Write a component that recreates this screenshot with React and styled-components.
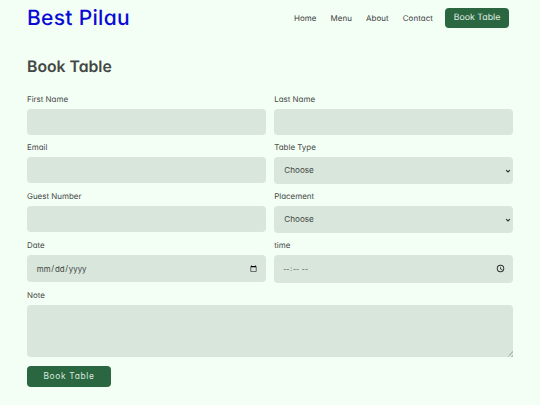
import React from "react";
import styled, { createGlobalStyle } from "styled-components";

const Global = createGlobalStyle`
  html, body { margin: 0; padding: 0; background: #f3fef5; }
  * { box-sizing: border-box; }
  body {
    font-family: "Inter", "Liberation Sans", sans-serif;
    font-feature-settings: "cv11";
    text-rendering: geometricPrecision;
    color: #3f4540;
  }
`;
const Page = styled.div`
  zoom: 0.75;
  width: 720px;
  height: 540px;
  padding: 0 36px;
  overflow: hidden;
`;
const Header = styled.header`
  display: flex;
  align-items: center;
  justify-content: space-between;
  height: 48px;
`;
const Logo = styled.div`
  font-size: 28px;
  font-weight: 500;
  color: #0a0ad6;
  letter-spacing: 0.4px;
`;
const Nav = styled.nav`
  display: flex;
  align-items: center;
  gap: 18.67px;
  padding-right: 5.33px;
`;
const NavLink = styled.a`
  font-size: 10.6px;
  color: #3c403d;
  letter-spacing: 0.1px;
`;
const NavButton = styled.a`
  display: flex;
  align-items: center;
  justify-content: center;
  width: 85.33px;
  height: 26px;
  margin-left: -2.67px;
  background: #2a6640;
  color: #e3efe6;
  font-size: 11.7px;
  border-radius: 5.33px;
`;
const Title = styled.h1`
  margin: 28px 0 0;
  height: 26.67px;
  line-height: 26.67px;
  font-size: 21px;
  font-weight: 600;
  color: #434844;
`;
const Form = styled.form`
  display: grid;
  grid-template-columns: 1fr 1fr;
  column-gap: 11.33px;
  row-gap: 9.33px;
  margin-top: 22.67px;
`;
const Field = styled.div`
  display: flex;
  flex-direction: column;
  grid-column: ${(p) => (p.$wide ? "1 / -1" : "auto")};
  margin-bottom: ${(p) => (p.$wide ? 2.67 : 0)}px;
`;
const Label = styled.label`
  height: 20px;
  line-height: 14.67px;
  font-size: 10.6px;
  color: #454a46;
`;
const controlStyles = `
  width: 100%;
  border: none;
  outline: none;
  background: #d8e6dc;
  border-radius: 5.33px;
  font-family: "Inter", "Liberation Sans", sans-serif;
  font-feature-settings: "cv11";
  color: #3f4540;
`;
const Input = styled.input`
  ${controlStyles}
  height: ${(p) => p.$h ?? 34.67}px;
  padding: 0 9px 0 12px;
  font-size: 10.5px;
`;
const TimeInput = styled(Input)`
  padding: 0 8px 0 11px;
  font-size: 9px;
  letter-spacing: -0.3px;
  &::-webkit-calendar-picker-indicator {
    width: 12px;
    height: 12px;
  }
`;
const SelectBox = styled.div`
  position: relative;
  height: 36px;
`;
const Select = styled.select`
  ${controlStyles}
  appearance: none;
  height: 36px;
  padding: 0 13.5px;
  font-size: 10.8px;
`;
const Chevron = styled.svg`
  position: absolute;
  right: 2.5px;
  top: 15.5px;
  width: 8px;
  height: 6px;
  fill: none;
  stroke: #2f3330;
  stroke-width: 1.5;
  pointer-events: none;
`;
const TextArea = styled.textarea`
  ${controlStyles}
  display: block;
  height: 69.33px;
  &::-webkit-resizer {
    background: linear-gradient(135deg, transparent 80%, #b4c1b8 80%, #b4c1b8 86%, transparent 86%, transparent 91%, #b4c1b8 91%);
  }
`;
const Submit = styled.button`
  display: block;
  width: 112px;
  height: 28px;
  border: none;
  border-radius: 5.33px;
  background: #2a6640;
  color: #d8e8dc;
  font-family: "Inter", "Liberation Sans", sans-serif;
  font-feature-settings: "cv11";
  font-size: 11.2px;
  letter-spacing: 0.9px;
  padding: 0;
`;

const Choice = ({ label }) => (
  <Field>
    <Label>{label}</Label>
    <SelectBox>
      <Select defaultValue="Choose"><option>Choose</option></Select>
      <Chevron viewBox="0 0 8 6"><path d="M1.5 1.5 L4 4 L6.5 1.5" /></Chevron>
    </SelectBox>
  </Field>
);

export default function App() {
  return (
    <Page>
      <Global />
      <Header>
        <Logo>Best Pilau</Logo>
        <Nav>
          <NavLink>Home</NavLink>
          <NavLink>Menu</NavLink>
          <NavLink>About</NavLink>
          <NavLink>Contact</NavLink>
          <NavButton>Book Table</NavButton>
        </Nav>
      </Header>
      <Title>Book Table</Title>
      <Form>
        <Field><Label>First Name</Label><Input /></Field>
        <Field><Label>Last Name</Label><Input /></Field>
        <Field><Label>Email</Label><Input /></Field>
        <Choice label="Table Type" />
        <Field><Label>Guest Number</Label><Input /></Field>
        <Choice label="Placement" />
        <Field><Label>Date</Label><Input type="date" $h={36} /></Field>
        <Field><Label>time</Label><TimeInput type="time" $h={37.33} /></Field>
        <Field $wide><Label>Note</Label><TextArea /></Field>
        <div><Submit type="button">Book Table</Submit></div>
      </Form>
    </Page>
  );
}
